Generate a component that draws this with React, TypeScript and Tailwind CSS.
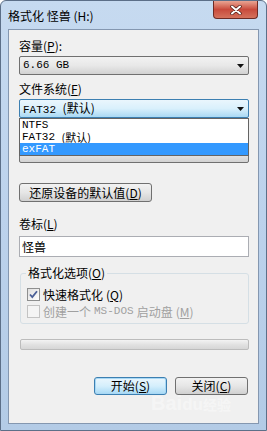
import React from 'react';

const cjk = { fontFamily: '"Noto Sans CJK SC", "Noto Sans", sans-serif' };
const mono = { fontFamily: '"Liberation Mono", "Noto Sans CJK SC", monospace' };

const Key: React.FC<{ k: string }> = ({ k }) => (
  <span>
    (<span className="underline">{k}</span>)
  </span>
);

const Arrow: React.FC = () => (
  <svg width="7" height="4" viewBox="0 0 7 4" className="mr-[4px]">
    <path d="M0 0h7L3.5 4z" fill="#111" />
  </svg>
);

const Combo: React.FC<{ focused?: boolean; children?: React.ReactNode }> = ({ focused, children }) => (
  <div
    className={
      'flex h-[19px] items-center justify-between rounded-[2px] border pl-[3px] ' +
      (focused
        ? 'border-[#3c7fb1] bg-gradient-to-b from-[#eaf6fd] via-[#d9f0fc] to-[#a9d9f4]'
        : 'border-[#707070] bg-gradient-to-b from-[#f2f2f2] via-[#e8e8e8] to-[#d2d2d2]')
    }
  >
    <span className="text-[11px] leading-none text-black" style={mono}>
      {children}
    </span>
    <Arrow />
  </div>
);

const Label: React.FC<{ children?: React.ReactNode; className?: string }> = ({ children, className }) => (
  <div className={'h-[14px] text-[12px] leading-[14px] text-black ' + (className || '')}>{children}</div>
);

export default function App() {
  return (
    <div
      className="relative flex h-[431px] w-[267px] flex-col overflow-hidden rounded-t-[6px] border border-[#5c6f88] bg-gradient-to-b from-[#c6daf0] via-[#bcd2ec] to-[#b3cbe6]"
      style={cjk}
    >
      {/* title bar */}
      <div className="flex h-[28px] shrink-0 items-start justify-between">
        <div className="pl-[7px] pt-[8px] text-[12px] leading-[14px] text-black">格式化 怪兽 (H:)</div>
        <div className="mr-[8px] flex h-[18px] w-[45px] items-center justify-center rounded-b-[4px] border border-t-0 border-[#6d2b25] bg-gradient-to-b from-[#e8a493] via-[#c84a3c] to-[#d4715c]">
          <svg width="12" height="10" viewBox="0 0 12 10">
            <path d="M2 1.5l8 7M10 1.5l-8 7" stroke="#4a1a14" strokeWidth="3.4" strokeLinecap="round" />
            <path d="M2 1.5l8 7M10 1.5l-8 7" stroke="#fff" strokeWidth="2" strokeLinecap="round" />
          </svg>
        </div>
      </div>

      {/* client */}
      <div className="mx-[7px] flex h-[395px] w-[251px] flex-col border border-[#8497b0] bg-[#f0f0f0] px-[10px] pr-[9px]">
        <Label className="mt-[9px]">
          容量<Key k="P" />:
        </Label>
        <div className="mt-[3px]">
          <Combo>6.66 GB</Combo>
        </div>

        <Label className="mt-[7px]">
          文件系统<Key k="F" />
        </Label>
        <div className="relative mt-[3px]">
          <Combo focused>
            FAT32 <span className="text-[12px]" style={cjk}>(默认)</span>
          </Combo>
          <div className="absolute left-0 right-0 top-[19px] z-10 flex h-[38px] flex-col border border-[#646464] bg-white text-[11px] leading-none" style={mono}>
            <div className="flex h-[12px] items-center pl-[2px]">NTFS</div>
            <div className="flex h-[12px] items-center pl-[2px]">
              FAT32&nbsp;<span className="text-[11px] leading-none" style={cjk}>(默认)</span>
            </div>
            <div className="flex h-[12px] items-center bg-[#3399ff] pl-[2px] text-white">exFAT</div>
          </div>
        </div>

        {/* allocation unit label + combo, hidden under the open list */}
        <Label className="mt-[7px]" />
        <div className="mt-[5px]">
          <Combo />
        </div>

        <div className="mt-[20px] flex h-[19px] w-[133px] items-center justify-center rounded-[3px] border border-[#707070] bg-gradient-to-b from-[#f2f2f2] via-[#e6e6e6] to-[#d0d0d0] text-[12px] leading-none">
          还原设备的默认值<Key k="D" />
        </div>

        <Label className="mt-[15px]">
          卷标<Key k="L" />
        </Label>
        <div className="mt-[5px] flex h-[21px] items-center border border-[#abadb3] bg-white pl-[2px] text-[12px]">
          怪兽
        </div>

        {/* options group */}
        <div className="relative mt-[16px] ml-[1px] h-[51px] rounded-[3px] border border-[#d5dfe5] pl-[6px] pt-[14px]">
          <div className="absolute -top-[8px] left-[5px] bg-[#f0f0f0] px-[2px] text-[12px] leading-[14px]">
            格式化选项<Key k="O" />
          </div>
          <div className="flex h-[13px] items-center gap-[3px] text-[12px] leading-none">
            <div className="flex h-[13px] w-[13px] items-center justify-center border border-[#8e8f8f] bg-gradient-to-br from-[#dfdfdf] to-[#ffffff]">
              <svg width="9" height="9" viewBox="0 0 9 9">
                <path d="M1 4.5l2.3 2.6L8 1.2" stroke="#4a5f97" strokeWidth="1.8" fill="none" />
              </svg>
            </div>
            快速格式化<Key k="Q" />
          </div>
          <div className="mt-[4px] flex h-[13px] items-center gap-[3px] text-[12px] leading-none text-[#a0a0a0]">
            <div className="h-[13px] w-[13px] border border-[#c3c3c3] bg-[#f4f4f4]" />
            创建一个 <span className="text-[11px]" style={mono}>MS-DOS</span> 启动盘<Key k="M" />
          </div>
        </div>

        <div className="mt-[15px] ml-[1px] h-[11px] rounded-[2px] border border-[#bcbcbc] bg-gradient-to-b from-[#f3f3f3] via-[#e2e2e2] to-[#d6d6d6]" />

        <div className="mt-[27px] flex justify-end gap-[8px] pr-[1px]">
          <div className="flex h-[18px] w-[73px] items-center justify-center rounded-[3px] border border-[#3c7fb1] bg-gradient-to-b from-[#eaf6fd] via-[#d5effc] to-[#a7d9f5] text-[12px] leading-none shadow-[0_0_0_1px_#a8d8f5_inset]">
            开始<Key k="S" />
          </div>
          <div className="flex h-[18px] w-[73px] items-center justify-center rounded-[3px] border border-[#707070] bg-gradient-to-b from-[#f2f2f2] via-[#e6e6e6] to-[#d0d0d0] text-[12px] leading-none">
            关闭<Key k="C" />
          </div>
        </div>
      </div>

      {/* watermark */}
      <div className="pointer-events-none absolute left-[150px] top-[392px] text-[20px] font-bold leading-none text-white/40" style={{ fontFamily: '"Liberation Sans", sans-serif' }}>
        Bai<span className="text-[17px]">du</span>
        <span className="text-[14px]" style={cjk}>经验</span>
      </div>
    </div>
  );
}
